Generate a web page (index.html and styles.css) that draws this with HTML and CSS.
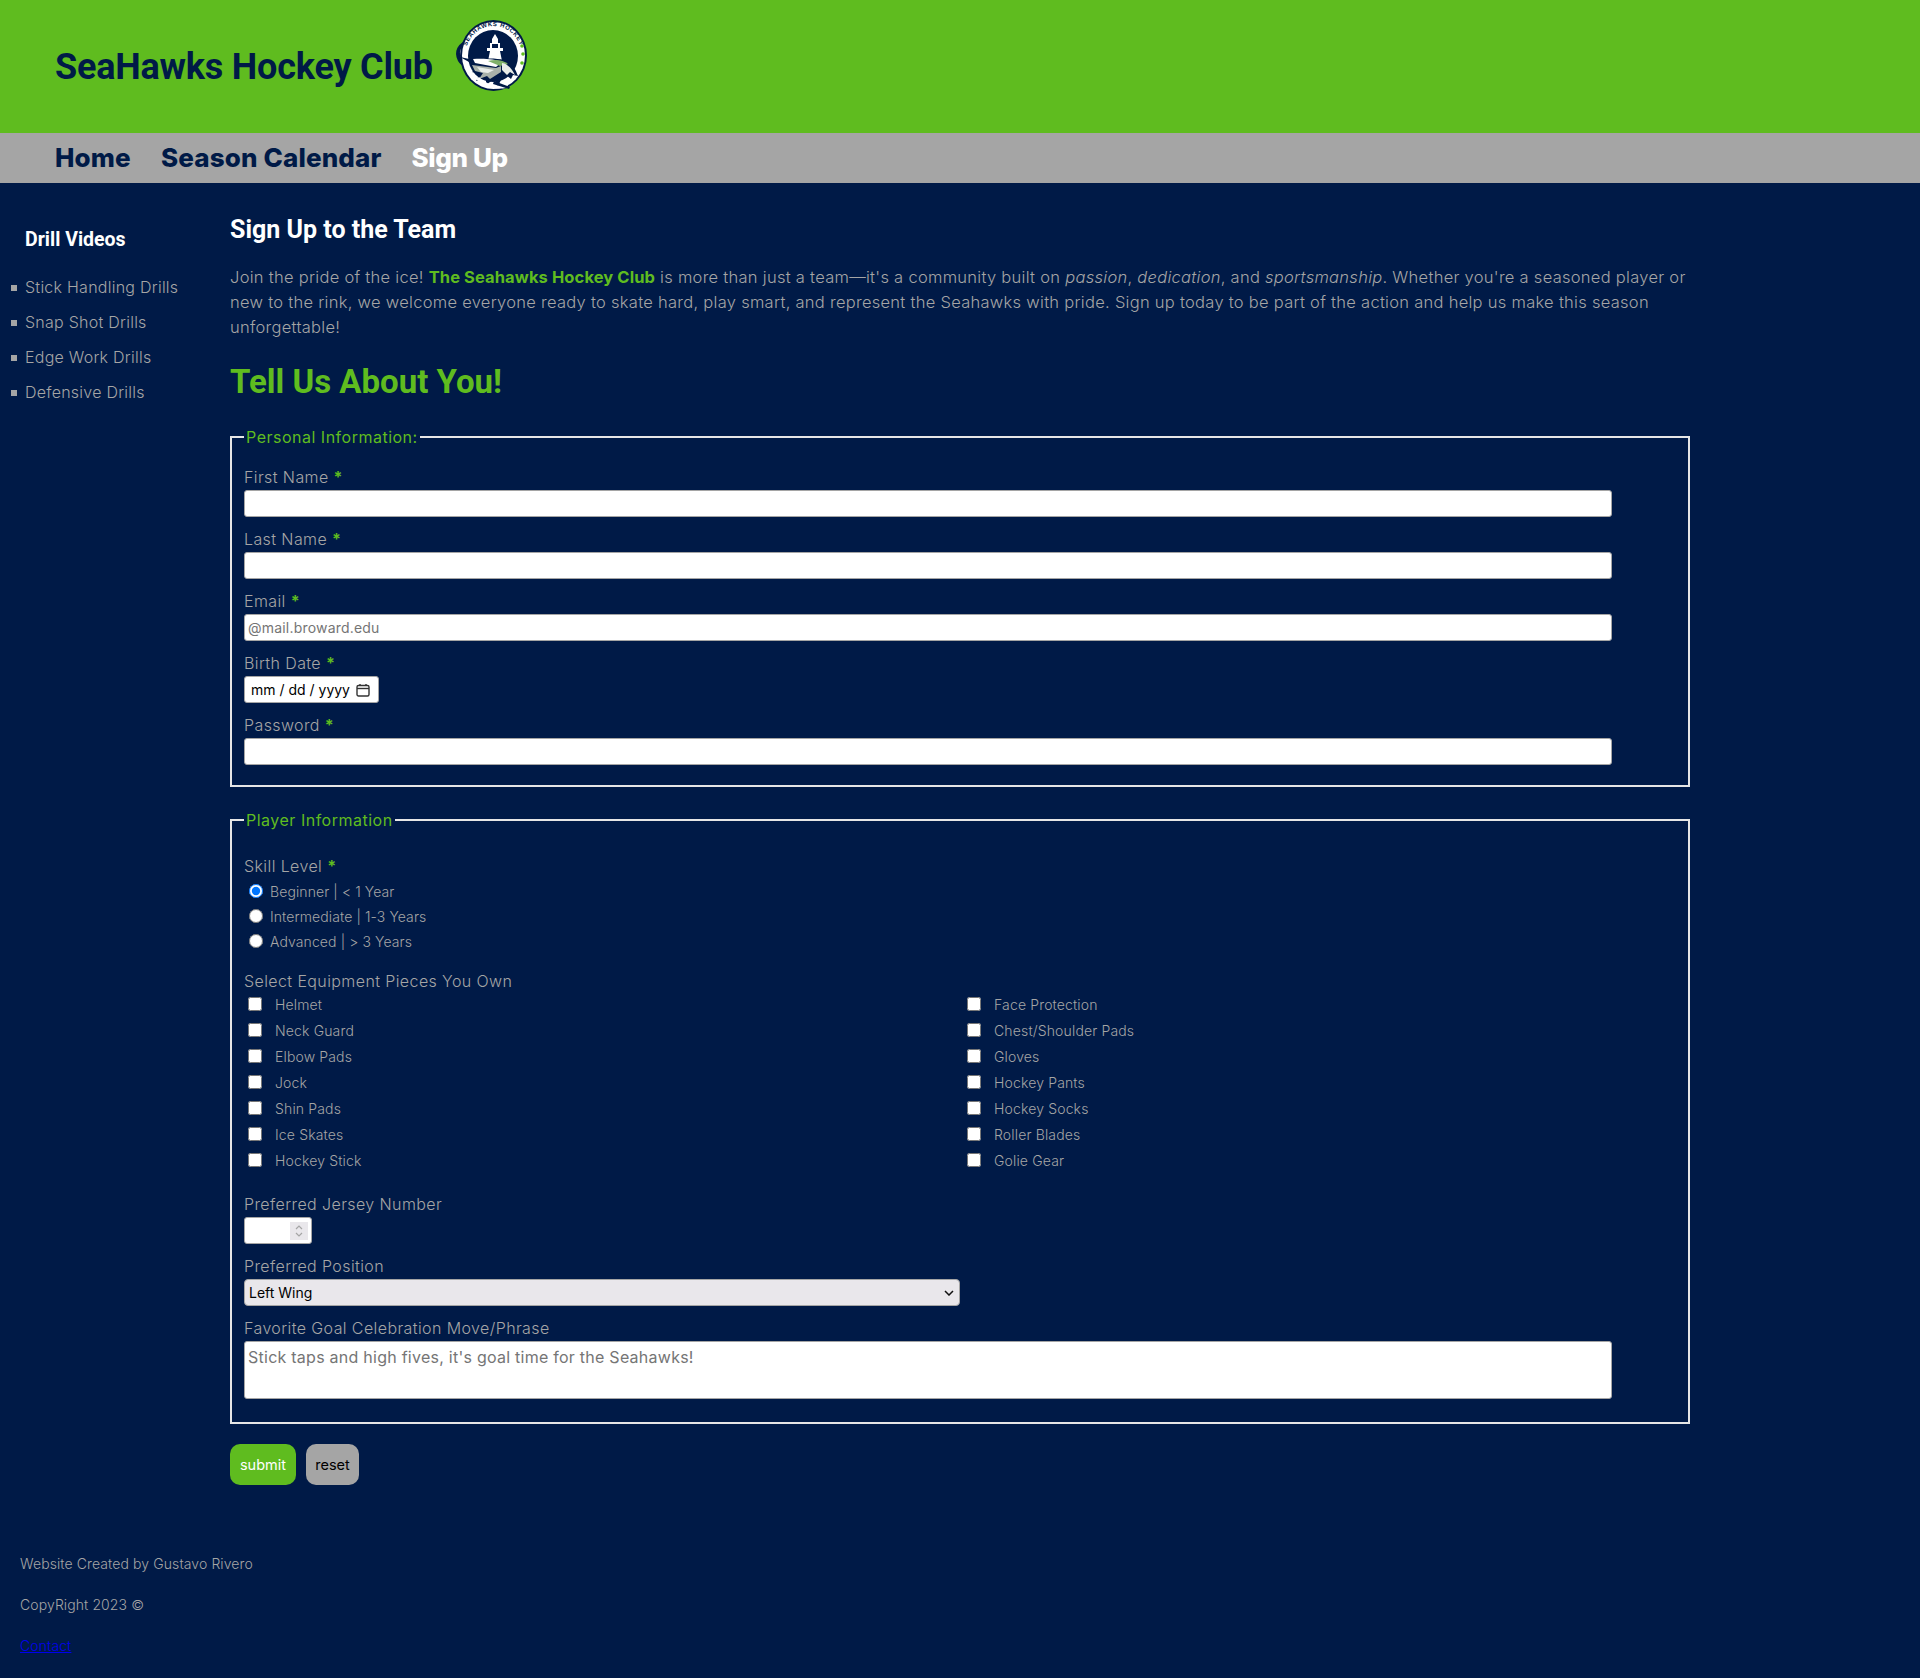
FILE: index.html
```html
<!DOCTYPE html>
<html lang="en">
<head>
    <meta charset="UTF-8">
    <meta name="viewport" content="width=device-width, initial-scale=1.0">
    <title>SeaHawks Hockey Club - Sign Up</title>
    <link rel="stylesheet" href="styles.css">
</head>
<body>
    <header class="site-header">
        <h1>SeaHawks Hockey Club</h1>
        <svg class="logo" viewBox="0 0 85 80" width="85" height="80" aria-label="Seahawks Hockey logo">
            <!-- swoosh behind the badge -->
            <path d="M19 24 C8 28 3 36 8 46 C11 51 16 53 22 54 L24 46 C17 43 13 38 15 33 C16 30 18 28 21 26 Z" fill="#001a47"/>
            <path d="M17 27 C10 32 8 38 12 44 C14 47 17 49 21 50 L21 48 C16 45 12 40 14 34 Z" fill="#fff"/>
            <ellipse cx="43.5" cy="40.5" rx="33.5" ry="35.5" fill="#001a47"/>
            <ellipse cx="43.5" cy="40.5" rx="31.5" ry="33.5" fill="#fff"/>
            <ellipse cx="43" cy="41" rx="25" ry="26" fill="#001a47"/>
            <path id="logoArc" d="M15.5 40.5 A 28 29.5 0 0 1 71.5 40.5" fill="none"/>
            <text class="logo-text"><textPath href="#logoArc" startOffset="50%" text-anchor="middle">SEAHAWKS HOCKEY</textPath></text>
            <!-- lighthouse -->
            <path d="M45 19 L48 24 L48 28 L50 28 L50 33 L53 33 L53 36 L50 36 L52 46 L38 46 L40 36 L37 36 L37 33 L40 33 L40 28 L42 28 L42 24 Z" fill="#fff"/>
            <path d="M42 29 H48 V33 H42 Z" fill="#001a47"/>
            <!-- eagle -->
            <path d="M10 42 L24 45 C34 43 46 43 54 45 C60 47 65 52 68 61 L63 60 L61 64 L56 60 L52 63 L48 71 L44 64 L36 70 L36 63 L26 66 L30 59 L22 57 L28 52 Z" fill="#001a47"/>
            <path d="M23 44 C33 43 45 44 52 47 L46 52 L25 48 Z" fill="#fff"/>
            <path d="M22 50 L46 53 L51 51 L51 57 L40 64 L37 61 L29 64 L33 58 L25 56 Z" fill="#a9b2aa"/>
            <path d="M27 52 L44 55 L38 58 L31 57 Z" fill="#e8ece8"/>
            <path d="M38 46 C46 44 53 45 58 49 L50 51 Z" fill="#7fb069"/>
            <path d="M52 48 C58 49 62 54 65 60 L60 57 L57 60 L52 55 Z" fill="#e8ece8"/>
            <!-- stick / lower band -->
            <path d="M26 64 C34 72 46 75 56 73 L58 70 L52 69 L50 71 C42 71 34 67 29 62 Z" fill="#fff"/>
            <path d="M44 66 L60 72 L59 74 L43 69 Z" fill="#001a47"/>
            <circle cx="72" cy="31" r="1.8" fill="#5fbc1f"/>
            <circle cx="73" cy="39" r="1.8" fill="#5fbc1f"/>
            <circle cx="72" cy="48" r="1.8" fill="#5fbc1f"/>
        </svg>
    </header>

    <nav class="site-nav">
        <a href="#">Home</a>
        <a href="#">Season Calendar</a>
        <a href="#" class="current">Sign Up</a>
    </nav>

    <div class="page">
        <aside class="sidebar">
            <h3>Drill Videos</h3>
            <ul>
                <li><a href="#">Stick Handling Drills</a></li>
                <li><a href="#">Snap Shot Drills</a></li>
                <li><a href="#">Edge Work Drills</a></li>
                <li><a href="#">Defensive Drills</a></li>
            </ul>
        </aside>

        <main class="content">
            <h2>Sign Up to the Team</h2>
            <p class="intro">Join the pride of the ice! <strong>The Seahawks Hockey Club</strong> is more than just a team—it's a community built on <em>passion</em>, <em>dedication</em>, and <em>sportsmanship</em>. Whether you're a seasoned player or new to the rink, we welcome everyone ready to skate hard, play smart, and represent the Seahawks with pride. Sign up today to be part of the action and help us make this season unforgettable!</p>
            <h2 class="green-title">Tell Us About You!</h2>

            <form>
                <fieldset class="personal">
                    <legend>Personal Information:</legend>
                    <label class="field-label first" for="first">First Name <span class="req">*</span></label>
                    <input class="wide" type="text" id="first">
                    <label class="field-label" for="last">Last Name <span class="req">*</span></label>
                    <input class="wide" type="text" id="last">
                    <label class="field-label" for="email">Email <span class="req">*</span></label>
                    <input class="wide" type="email" id="email" placeholder="@mail.broward.edu">
                    <label class="field-label" for="birth">Birth Date <span class="req">*</span></label>
                    <div class="date-box">
                        <input type="text" id="birth" placeholder="mm / dd / yyyy">
                        <svg viewBox="0 0 14 14" width="14" height="14">
                            <rect x="1" y="2.5" width="12" height="10.5" rx="1.5" fill="none" stroke="#333" stroke-width="1.4"/>
                            <path d="M1 5.5 H13" stroke="#333" stroke-width="1.4"/>
                            <path d="M4 1 V3 M10 1 V3" stroke="#333" stroke-width="1.4"/>
                        </svg>
                    </div>
                    <label class="field-label" for="pass">Password <span class="req">*</span></label>
                    <input class="wide" type="password" id="pass">
                </fieldset>

                <fieldset class="player">
                    <legend>Player Information</legend>
                    <div class="field-label skill">Skill Level <span class="req">*</span></div>
                    <label class="radio"><input type="radio" name="skill" checked> Beginner | &lt; 1 Year</label>
                    <label class="radio"><input type="radio" name="skill"> Intermediate | 1-3 Years</label>
                    <label class="radio"><input type="radio" name="skill"> Advanced | &gt; 3 Years</label>

                    <div class="field-label equip-title">Select Equipment Pieces You Own</div>
                    <div class="equip">
                        <label><input type="checkbox"> Helmet</label>
                        <label><input type="checkbox"> Face Protection</label>
                        <label><input type="checkbox"> Neck Guard</label>
                        <label><input type="checkbox"> Chest/Shoulder Pads</label>
                        <label><input type="checkbox"> Elbow Pads</label>
                        <label><input type="checkbox"> Gloves</label>
                        <label><input type="checkbox"> Jock</label>
                        <label><input type="checkbox"> Hockey Pants</label>
                        <label><input type="checkbox"> Shin Pads</label>
                        <label><input type="checkbox"> Hockey Socks</label>
                        <label><input type="checkbox"> Ice Skates</label>
                        <label><input type="checkbox"> Roller Blades</label>
                        <label><input type="checkbox"> Hockey Stick</label>
                        <label><input type="checkbox"> Golie Gear</label>
                    </div>

                    <label class="field-label jersey-label" for="jersey">Preferred Jersey Number</label>
                    <div class="number-box">
                        <input type="text" id="jersey">
                        <svg class="spin" viewBox="0 0 18 18" width="18" height="18">
                            <rect width="18" height="18" fill="#e9e7eb"/>
                            <path d="M6 7 L9 4 L12 7 M6 11 L9 14 L12 11" fill="none" stroke="#a5a5a5" stroke-width="1.2"/>
                        </svg>
                    </div>
                    <label class="field-label" for="position">Preferred Position</label>
                    <div class="select-box">
                        <select id="position">
                            <option>Left Wing</option>
                            <option>Right Wing</option>
                            <option>Center</option>
                            <option>Defense</option>
                            <option>Goalie</option>
                        </select>
                        <svg viewBox="0 0 10 6" width="10" height="6">
                            <path d="M1 1 L5 5 L9 1" fill="none" stroke="#111" stroke-width="1.5"/>
                        </svg>
                    </div>
                    <label class="field-label" for="move">Favorite Goal Celebration Move/Phrase</label>
                    <textarea class="wide move" id="move" placeholder="Stick taps and high fives, it's goal time for the Seahawks!"></textarea>
                </fieldset>

                <div class="buttons">
                    <button class="submit" type="submit">submit</button>
                    <button class="reset" type="reset">reset</button>
                </div>
            </form>
        </main>
    </div>

    <footer class="site-footer">
        <p>Website Created by Gustavo Rivero</p>
        <p>CopyRight 2023 ©</p>
        <p><a href="#">Contact</a></p>
    </footer>
</body>
</html>
```

FILE: styles.css
```css
* {
    box-sizing: border-box;
}

body {
    margin: 0;
    background-color: #001a47;
    color: #a5a5a5;
    font-family: Inter, "Open Sans", sans-serif;
    font-size: 16px;
    font-weight: 350;
}

/* header */
.site-header {
    height: 133px;
    background-color: #5fbc1f;
    padding: 15px 0 0 55px;
    display: flex;
    align-items: flex-start;
    gap: 17px;
}

.site-header h1 {
    margin: 30px 0 0;
    color: #001a47;
    font-family: Roboto, sans-serif;
    font-size: 36px;
    line-height: 44px;
    font-weight: 700;
    letter-spacing: -0.2px;
}

.logo-text {
    font-family: "Liberation Sans", sans-serif;
    font-size: 6px;
    font-weight: 700;
    letter-spacing: 0.6px;
    fill: #001a47;
}

/* nav */
.site-nav {
    height: 50px;
    background-color: #a5a5a5;
    padding: 0 0 2px 55px;
    display: flex;
    align-items: center;
    gap: 30px;
}

.site-nav a {
    color: #001a47;
    font-size: 26px;
    font-weight: 800;
    letter-spacing: 0.15px;
    text-decoration: none;
}

.site-nav a.current {
    color: #fff;
    letter-spacing: -0.4px;
}

/* sidebar and main */
.page {
    display: flex;
    align-items: flex-start;
}

.sidebar {
    width: 230px;
    flex-shrink: 0;
    padding: 45px 0 0 25px;
}

.sidebar h3 {
    margin: 0 0 18px;
    color: #fff;
    font-family: Roboto, sans-serif;
    font-size: 19.5px;
    line-height: 24px;
    font-weight: 700;
}

.sidebar ul {
    margin: 0;
    padding: 0;
    list-style: none;
}

.sidebar li {
    height: 35px;
    line-height: 35px;
    letter-spacing: 0.25px;
    position: relative;
}

.sidebar li::before {
    content: "";
    position: absolute;
    left: -14px;
    top: 15px;
    width: 6px;
    height: 6px;
    background-color: #a5a5a5;
}

.sidebar a {
    color: #a5a5a5;
    text-decoration: none;
}

.content {
    width: 1460px;
    padding-top: 33px;
}

.content h2 {
    margin: 0;
    color: #fff;
    font-family: Roboto, sans-serif;
    font-size: 25px;
    line-height: 28px;
    font-weight: 700;
}

.intro {
    margin: 21px 0 0;
    font-size: 16.5px;
    line-height: 25px;
    letter-spacing: 0.28px;
}

.intro strong {
    color: #5fbc1f;
    font-weight: 700;
    letter-spacing: 0.1px;
}

.content h2.green-title {
    margin: 22px 0 0;
    color: #5fbc1f;
    font-size: 33px;
    line-height: 40px;
}

/* form */
fieldset {
    margin: 0;
    padding: 0 12px;
    border: 2px solid #e6e6e6;
}

legend {
    padding: 0 2px;
    color: #5fbc1f;
    font-size: 16px;
    font-weight: 400;
    line-height: 24px;
    letter-spacing: 0.5px;
}

.personal {
    margin-top: 23px;
    padding-bottom: 20px;
}

.player {
    margin-top: 21px;
    padding-bottom: 23px;
}

.field-label {
    display: block;
    margin-top: 9px;
    line-height: 26px;
    letter-spacing: 0.4px;
}

.field-label.first {
    margin-top: 15px;
}

.req {
    color: #5fbc1f;
    font-weight: 700;
}

input.wide,
textarea.wide {
    display: block;
    width: 1368px;
    height: 27px;
    border: 1px solid #a5a5a5;
    border-radius: 3px;
    background-color: #fff;
    padding: 1px 3px;
    font-family: inherit;
    font-size: 14px;
    letter-spacing: 0.2px;
}

.date-box,
.number-box {
    display: flex;
    align-items: center;
    height: 27px;
    border: 1px solid #a5a5a5;
    border-radius: 3px;
    background-color: #fff;
}

.date-box {
    width: 135px;
    padding: 0 8px 0 6px;
}

.date-box input,
.number-box input {
    flex: 1;
    min-width: 0;
    border: 0;
    padding: 0;
    background: none;
    outline: none;
    font-family: inherit;
    font-size: 14px;
    font-weight: 400;
}

.date-box input::placeholder {
    color: #000;
    opacity: 1;
}

.number-box {
    width: 68px;
    padding-right: 3px;
}

.skill {
    margin-top: 21px;
}

.radio {
    display: flex;
    align-items: center;
    height: 25px;
    font-size: 14px;
    gap: 7px;
    letter-spacing: 0.1px;
}

.radio input {
    margin: 0 0 2px 5px;
    width: 14px;
    height: 14px;
}

.field-label.equip-title {
    margin-top: 18px;
    line-height: 19px;
}

.equip {
    display: grid;
    grid-template-columns: 719px 1fr;
    grid-auto-rows: 26px;
}

.equip label {
    display: flex;
    align-items: center;
    gap: 13px;
    font-size: 14px;
    letter-spacing: 0.15px;
}

.equip input {
    margin: 0 0 0 4px;
    width: 14px;
    height: 14px;
}

.field-label.jersey-label {
    margin-top: 18px;
}

.select-box {
    display: flex;
    align-items: center;
    width: 716px;
    height: 27px;
    border: 1px solid #a5a5a5;
    border-radius: 4px;
    background-color: #e9e7eb;
    padding-right: 5px;
}

.select-box select {
    flex: 1;
    min-width: 0;
    height: 100%;
    border: 0;
    padding: 0 4px;
    appearance: none;
    background: none;
    outline: none;
    color: #000;
    font-family: inherit;
    font-size: 14px;
    font-weight: 400;
}

textarea.wide.move {
    height: 58px;
    padding: 5px 3px;
    font-size: 16px;
    letter-spacing: 0.25px;
    resize: none;
}

.buttons {
    margin-top: 20px;
    display: flex;
    gap: 10px;
}

.buttons button {
    height: 41px;
    border: 0;
    border-radius: 10px;
    padding: 0;
    font-family: inherit;
    font-size: 14.5px;
    font-weight: 400;
}

.submit {
    width: 66px;
    background-color: #5fbc1f;
    color: #fff;
}

.reset {
    width: 53px;
    background-color: #a5a5a5;
    color: #000;
}

/* footer */
.site-footer {
    padding: 68px 0 0 20px;
    font-size: 14px;
    letter-spacing: 0.1px;
}

.site-footer p {
    margin: 0 0 20px;
    line-height: 21px;
}

.site-footer a {
    color: #0000ee;
}
```
